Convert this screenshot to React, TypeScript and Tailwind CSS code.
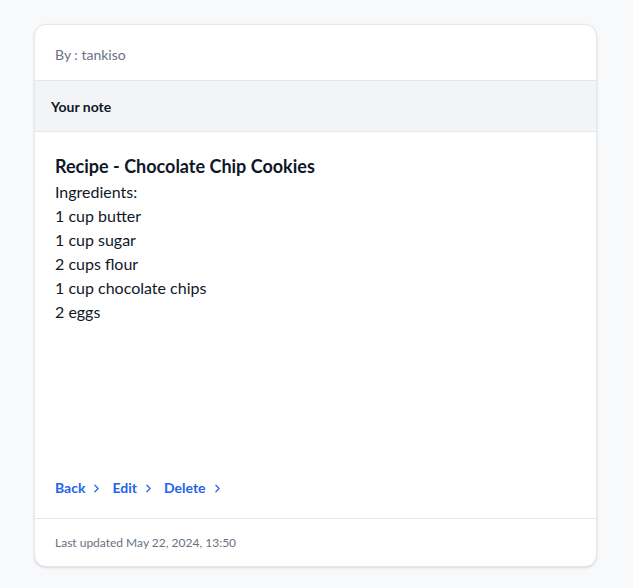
import React from "react";
import { ChevronRight } from "lucide-react";

const lines = ["Ingredients:", "1 cup butter", "1 cup sugar", "2 cups flour", "1 cup chocolate chips", "2 eggs"];
const actions = ["Back", "Edit", "Delete"];

export default function App() {
  return (
    <div className="min-h-[588px] bg-[#f8f9fb] pt-6 pl-[34px] font-['Lato',sans-serif]">
      <div className="w-[563px] bg-white border border-gray-200 rounded-xl shadow-sm overflow-hidden">
        {/* Author */}
        <div className="px-5 pt-5 pb-[15px] border-b border-gray-200 text-sm text-gray-500">By : tankiso</div>

        {/* Section title */}
        <div className="px-4 pt-4 pb-[14px] bg-gray-100 border-b border-gray-200 text-sm font-bold text-gray-900">
          Your note
        </div>

        {/* Note body */}
        <div className="h-[386px] px-5 pt-5 pb-5 flex flex-col">
          <h2 className="text-lg leading-7 font-bold text-gray-900">Recipe - Chocolate Chip Cookies</h2>
          <div className="text-base leading-6 text-gray-900">
            {lines.map((l) => (
              <div key={l}>{l}</div>
            ))}
          </div>
          <div className="mt-auto flex items-center gap-[9px] text-sm font-bold text-[#2563eb]">
            {actions.map((a) => (
              <a key={a} href="#" className="flex items-center gap-[5px] hover:underline">
                {a}
                <ChevronRight size={13} strokeWidth={2.25} />
              </a>
            ))}
          </div>
        </div>

        {/* Footer */}
        <div className="px-5 pt-4 pb-[15px] border-t border-gray-200 text-xs text-gray-500">
          Last updated May 22, 2024, 13:50
        </div>
      </div>
    </div>
  );
}
